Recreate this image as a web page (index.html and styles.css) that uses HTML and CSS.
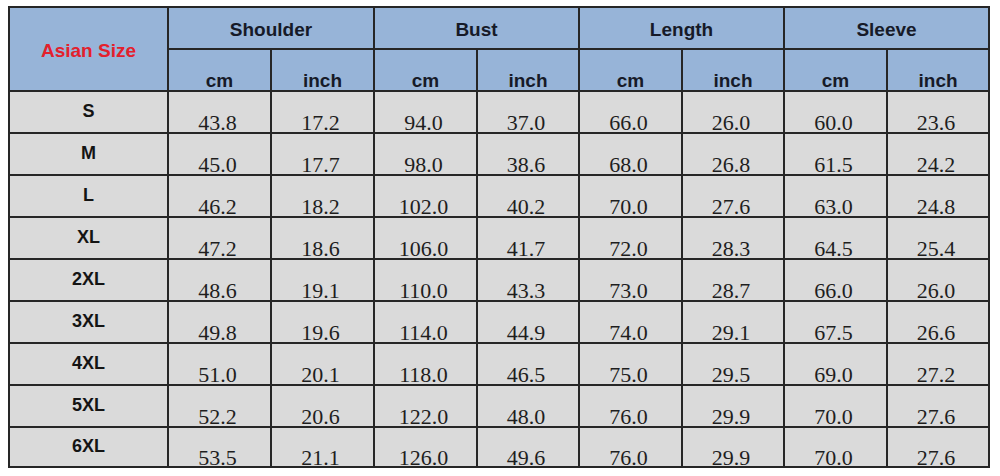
FILE: index.html
```html
<!DOCTYPE html>
<html>
<head>
<meta charset="utf-8">
<link rel="stylesheet" href="styles.css">
</head>
<body>
<table class="chart">
  <colgroup>
    <col class="c-size">
    <col class="c-a"><col class="c-a">
    <col class="c-a"><col class="c-b">
    <col class="c-a"><col class="c-b">
    <col class="c-a"><col class="c-b">
  </colgroup>
  <thead>
    <tr class="hrow">
      <th class="asian" rowspan="2">Asian Size</th>
      <th class="group" colspan="2">Shoulder</th>
      <th class="group" colspan="2">Bust</th>
      <th class="group" colspan="2">Length</th>
      <th class="group" colspan="2">Sleeve</th>
    </tr>
    <tr class="hrow">
      <th class="unit">cm</th><th class="unit">inch</th>
      <th class="unit">cm</th><th class="unit">inch</th>
      <th class="unit">cm</th><th class="unit">inch</th>
      <th class="unit">cm</th><th class="unit">inch</th>
    </tr>
  </thead>
  <tbody>
    <tr class="drow"><th class="size">S</th><td>43.8</td><td>17.2</td><td>94.0</td><td>37.0</td><td>66.0</td><td>26.0</td><td>60.0</td><td>23.6</td></tr>
    <tr class="drow"><th class="size">M</th><td>45.0</td><td>17.7</td><td>98.0</td><td>38.6</td><td>68.0</td><td>26.8</td><td>61.5</td><td>24.2</td></tr>
    <tr class="drow"><th class="size">L</th><td>46.2</td><td>18.2</td><td>102.0</td><td>40.2</td><td>70.0</td><td>27.6</td><td>63.0</td><td>24.8</td></tr>
    <tr class="drow"><th class="size">XL</th><td>47.2</td><td>18.6</td><td>106.0</td><td>41.7</td><td>72.0</td><td>28.3</td><td>64.5</td><td>25.4</td></tr>
    <tr class="drow"><th class="size">2XL</th><td>48.6</td><td>19.1</td><td>110.0</td><td>43.3</td><td>73.0</td><td>28.7</td><td>66.0</td><td>26.0</td></tr>
    <tr class="drow"><th class="size">3XL</th><td>49.8</td><td>19.6</td><td>114.0</td><td>44.9</td><td>74.0</td><td>29.1</td><td>67.5</td><td>26.6</td></tr>
    <tr class="drow"><th class="size">4XL</th><td>51.0</td><td>20.1</td><td>118.0</td><td>46.5</td><td>75.0</td><td>29.5</td><td>69.0</td><td>27.2</td></tr>
    <tr class="drow"><th class="size">5XL</th><td>52.2</td><td>20.6</td><td>122.0</td><td>48.0</td><td>76.0</td><td>29.9</td><td>70.0</td><td>27.6</td></tr>
    <tr class="drow last"><th class="size">6XL</th><td>53.5</td><td>21.1</td><td>126.0</td><td>49.6</td><td>76.0</td><td>29.9</td><td>70.0</td><td>27.6</td></tr>
  </tbody>
</table>
</body>
</html>
```

FILE: styles.css
```css
html, body {
  margin: 0;
  padding: 0;
  background: #ffffff;
}

body {
  padding: 6px 0 0 8px;
  font-family: "Liberation Sans", Arial, sans-serif;
}

.chart {
  border-collapse: collapse;
  table-layout: fixed;
  width: 980px;
  border: 2px solid #151515;
}

.c-size { width: 159px; }
.c-a { width: 103px; }
.c-b { width: 102px; }

.chart th,
.chart td {
  border: 2px solid #262626;
  padding: 0;
  text-align: center;
}

.hrow { height: 42px; }
.drow { height: 42px; }
.drow.last { height: 40px; }

.hrow th {
  background: #97b4d8;
  color: #161a28;
  font-weight: bold;
  font-size: 19px;
}

.asian {
  color: #e3202c !important;
  vertical-align: middle;
  padding-top: 3px !important;
}

.group {
  vertical-align: middle;
  padding-top: 4px !important;
}

.unit {
  vertical-align: bottom;
  line-height: 19px;
}

.drow th,
.drow td {
  background: #dadada;
}

.size {
  font-weight: bold;
  font-size: 18px;
  color: #141414;
  vertical-align: middle;
  padding-bottom: 1px !important;
}

.drow td {
  font-family: "Liberation Serif", "Times New Roman", serif;
  font-size: 22px;
  color: #1e1e1e;
  line-height: 18px;
  vertical-align: bottom;
  padding-right: 4px;
}

.drow.last td {
  line-height: 16px;
}
```
